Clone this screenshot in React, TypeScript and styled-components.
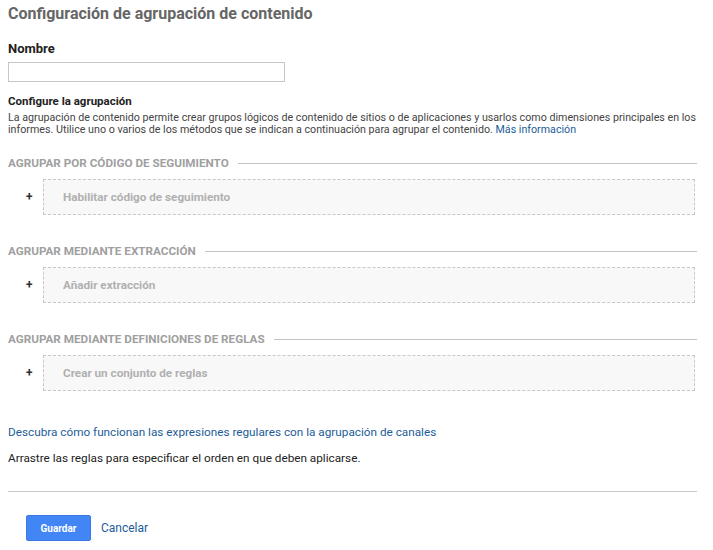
import styled, { createGlobalStyle } from 'styled-components';

const GlobalStyle = createGlobalStyle`
  html, body {
    margin: 0;
    padding: 0;
    background: #fff;
  }
  body {
    font-family: Roboto, "Liberation Sans", Arial, sans-serif;
    color: #222;
  }
`;

const Page = styled.div`
  padding: 4px 3px 0 8px;
  display: flex;
  flex-direction: column;
`;

const Title = styled.h1`
  margin: 0;
  font-size: 16px;
  line-height: 20px;
  font-weight: 700;
  color: #666;
`;

const FieldLabel = styled.label`
  margin-top: 17px;
  font-size: 13px;
  line-height: 15px;
  font-weight: 700;
  color: #222;
`;

const TextInput = styled.input`
  margin-top: 6px;
  width: 277px;
  height: 20px;
  box-sizing: border-box;
  border: 1px solid #c6c6c6;
  border-radius: 0;
  padding: 2px 4px;
  font: inherit;
  font-size: 12px;
`;

const SubTitle = styled.h2`
  margin: 12px 0 0 0;
  font-size: 11.5px;
  line-height: 14px;
  font-weight: 700;
  color: #222;
`;

const Intro = styled.p`
  margin: 4px 0 0 0;
  font-size: 10.7px;
  line-height: 12px;
  color: #444;
`;

const Link = styled.a<{ $size?: number }>`
  color: #1c5d99;
  text-decoration: none;
  font-size: ${p => p.$size ?? 10.7}px;
  cursor: pointer;
`;

const Section = styled.section<{ $first?: boolean }>`
  margin: ${p => (p.$first ? '20px' : '29px')} 13px 0 0;
`;

const SectionHeader = styled.div`
  display: flex;
  align-items: center;
  gap: 9px;
  font-size: 11.7px;
  line-height: 14px;
  font-weight: 700;
  color: #a0a0a0;
  white-space: nowrap;

  &::after {
    content: '';
    flex: 1;
    height: 1px;
    background: #c4c4c4;
  }
`;

const AddRow = styled.div`
  display: flex;
  align-items: stretch;
  margin-top: 9px;
`;

const Plus = styled.span`
  width: 35px;
  display: flex;
  align-items: center;
  padding-left: 18px;
  box-sizing: border-box;
  font-size: 12px;
  font-weight: 700;
  color: #333;
`;

const DropZone = styled.div`
  flex: 1;
  height: 36px;
  box-sizing: border-box;
  margin-right: 2px;
  border: 1px dashed #c8c8c8;
  background: #f8f8f8;
  display: flex;
  align-items: center;
  padding-left: 19px;
  font-size: 11.7px;
  font-weight: 700;
  color: #b0b0b0;
  cursor: pointer;
`;

const HelpLink = styled.div`
  margin-top: 33px;
  line-height: 14px;
`;

const Note = styled.p`
  margin: 12px 0 0 0;
  font-size: 11.75px;
  line-height: 14px;
  color: #222;
`;

const Divider = styled.hr`
  margin: 26px 13px 0 0;
  border: none;
  height: 1px;
  background: #c8c8c8;
`;

const Actions = styled.div`
  display: flex;
  align-items: center;
  gap: 10px;
  margin-top: 23px;
  padding-left: 18px;
`;

const PrimaryButton = styled.button`
  width: 65px;
  height: 26px;
  border: 1px solid #3b78e7;
  border-radius: 2px;
  background: #4285f4;
  color: #fff;
  font-family: inherit;
  font-size: 10px;
  font-weight: 700;
  cursor: pointer;
`;

const sections = [
  { title: 'AGRUPAR POR CÓDIGO DE SEGUIMIENTO', action: 'Habilitar código de seguimiento' },
  { title: 'AGRUPAR MEDIANTE EXTRACCIÓN', action: 'Añadir extracción' },
  { title: 'AGRUPAR MEDIANTE DEFINICIONES DE REGLAS', action: 'Crear un conjunto de reglas' },
];

const App = () => {
  return (
    <>
      <GlobalStyle />
      <Page>
        <Title>Configuración de agrupación de contenido</Title>
        <FieldLabel htmlFor="nombre">Nombre</FieldLabel>
        <TextInput id="nombre" type="text" />

        <SubTitle>Configure la agrupación</SubTitle>
        <Intro>
          La agrupación de contenido permite crear grupos lógicos de contenido de sitios o de aplicaciones y usarlos como dimensiones principales en los informes. Utilice uno o varios de los métodos que se indican a continuación para agrupar el contenido.{' '}
          <Link>Más información</Link>
        </Intro>

        {sections.map((s, i) => (
          <Section key={s.title} $first={i === 0}>
            <SectionHeader>{s.title}</SectionHeader>
            <AddRow>
              <Plus>+</Plus>
              <DropZone>{s.action}</DropZone>
            </AddRow>
          </Section>
        ))}

        <HelpLink>
          <Link $size={11.75}>Descubra cómo funcionan las expresiones regulares con la agrupación de canales</Link>
        </HelpLink>
        <Note>Arrastre las reglas para especificar el orden en que deben aplicarse.</Note>

        <Divider />
        <Actions>
          <PrimaryButton>Guardar</PrimaryButton>
          <Link $size={12}>Cancelar</Link>
        </Actions>
      </Page>
    </>
  );
};

export default App;
